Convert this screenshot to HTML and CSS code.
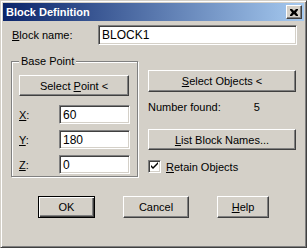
FILE: index.html
```html
<!DOCTYPE html>
<html lang="en">
<head>
  <meta charset="UTF-8">
  <title>Block Definition</title>
  <link rel="stylesheet" href="styles.css">
</head>
<body>

  <div class="window">
    <div class="titlebar">
      <span class="title">Block Definition</span>
      <span class="close">
        <svg width="8" height="7" viewBox="0 0 8 7">
          <path d="M0 0h2l2 2 2-2h2v1l-2 2.5 2 2.5v1h-2l-2-2-2 2h-2v-1l2-2.5-2-2.5z" fill="#000"/>
        </svg>
      </span>
    </div>

    <div class="content">
      <div class="name-row">
        <label><u>B</u>lock name:</label>
        <div class="edit name-edit">BLOCK1</div>
      </div>

      <div class="main">
        <div class="group">
          <span class="group-title">Base Point</span>
          <div class="button point-btn"><span>Select <u>P</u>oint &lt;</span></div>
          <div class="coord"><label><u>X</u>:</label><div class="edit">60</div></div>
          <div class="coord"><label><u>Y</u>:</label><div class="edit">180</div></div>
          <div class="coord"><label><u>Z</u>:</label><div class="edit">0</div></div>
        </div>

        <div class="side">
          <div class="button"><span><u>S</u>elect Objects &lt;</span></div>
          <div class="found"><span>Number found:</span><span class="count">5</span></div>
          <div class="button list-btn"><span><u>L</u>ist Block Names...</span></div>
          <div class="check-row">
            <span class="checkbox">
              <svg width="9" height="9" viewBox="0 0 9 9">
                <path d="M1 3v2l2 2 5-5v-2l-5 5z" fill="#000"/>
              </svg>
            </span>
            <span><u>R</u>etain Objects</span>
          </div>
        </div>
      </div>

      <div class="actions">
        <div class="button default ok">OK</div>
        <div class="button cancel">Cancel</div>
        <div class="button help"><span><u>H</u>elp</span></div>
      </div>
    </div>
  </div>

</body>
</html>
```

FILE: styles.css
```css
body {
  margin: 0;
  background: #d4d0c8;
  font-family: "Liberation Sans", Arial, sans-serif;
  font-size: 11px;
  color: #000;
}

u {
  text-decoration: underline;
  text-underline-offset: 1px;
}

.window {
  width: 307px;
  height: 248px;
  box-sizing: border-box;
  padding: 2px;
  border: 1px solid;
  border-color: #d4d0c8 #404040 #404040 #d4d0c8;
  box-shadow: inset 1px 1px #fff, inset -1px -1px #808080;
  background: #d4d0c8;
}

.titlebar {
  height: 18px;
  display: flex;
  align-items: center;
  justify-content: space-between;
  padding: 0 2px 0 3px;
  background: linear-gradient(to right, #0a246a, #a6caf0);
}

.title {
  color: #fff;
  font-weight: bold;
  font-size: 11px;
}

.close {
  width: 16px;
  height: 14px;
  box-sizing: border-box;
  display: flex;
  align-items: center;
  justify-content: center;
  background: #d4d0c8;
  border: 1px solid;
  border-color: #fff #404040 #404040 #fff;
  box-shadow: inset -1px -1px #808080;
}

.content {
  padding: 0 7px 0 8px;
}

.name-row {
  display: flex;
  align-items: center;
  margin-top: 4px;
}

.name-row label {
  margin-left: 1px;
}

.edit {
  height: 19px;
  box-sizing: border-box;
  padding: 0 3px;
  display: flex;
  align-items: center;
  font-size: 12px;
  background: #fff;
  border: 1px solid;
  border-color: #808080 #fff #fff #808080;
  box-shadow: inset 1px 1px #404040, inset -1px -1px #d4d0c8;
}

.name-edit {
  margin-left: auto;
  width: 199px;
  height: 20px;
}

.main {
  display: flex;
  margin-top: 16px;
}

.group {
  width: 127px;
  height: 116px;
  box-sizing: border-box;
  border: 1px solid #808080;
  box-shadow: inset 1px 1px #fff, 1px 1px #fff;
  display: flex;
  flex-direction: column;
}

.group-title {
  align-self: flex-start;
  margin: -7px 0 0 7px;
  padding: 0 2px;
  line-height: 13px;
  background: #d4d0c8;
}

.button {
  height: 22px;
  box-sizing: border-box;
  display: flex;
  align-items: center;
  justify-content: center;
  background: #d4d0c8;
  border: 1px solid;
  border-color: #fff #404040 #404040 #fff;
  box-shadow: inset -1px -1px #808080;
}

.point-btn {
  width: 110px;
  height: 21px;
  margin: 7px 0 0 7px;
}

.coord {
  display: flex;
  align-items: center;
  margin: 6px 0 0 7px;
}

.point-btn + .coord {
  margin-top: 9px;
}

.coord .edit {
  width: 71px;
  margin-left: auto;
  margin-right: 7px;
}

.side {
  width: 148px;
  margin: 9px 1px 0 auto;
}

.found {
  display: flex;
  height: 13px;
  align-items: center;
  margin-top: 8px;
}

.count {
  margin-left: 33px;
}

.list-btn {
  margin-top: 16px;
  height: 21px;
}

.check-row {
  display: flex;
  align-items: center;
  margin-top: 10px;
}

.checkbox {
  width: 13px;
  height: 13px;
  box-sizing: border-box;
  margin-right: 5px;
  display: flex;
  align-items: center;
  justify-content: center;
  background: #fff;
  border: 1px solid;
  border-color: #808080 #fff #fff #808080;
  box-shadow: inset 1px 1px #404040, inset -1px -1px #d4d0c8;
}

.actions {
  display: flex;
  margin-top: 19px;
}

.default {
  border: 1px solid #000;
  box-shadow: inset 1px 1px #fff, inset -1px -1px #404040, inset -2px -2px #808080;
}

.ok {
  width: 57px;
  margin-left: 27px;
}

.cancel {
  width: 66px;
  margin-left: 28px;
}

.help {
  width: 52px;
  margin-left: 28px;
}
```
